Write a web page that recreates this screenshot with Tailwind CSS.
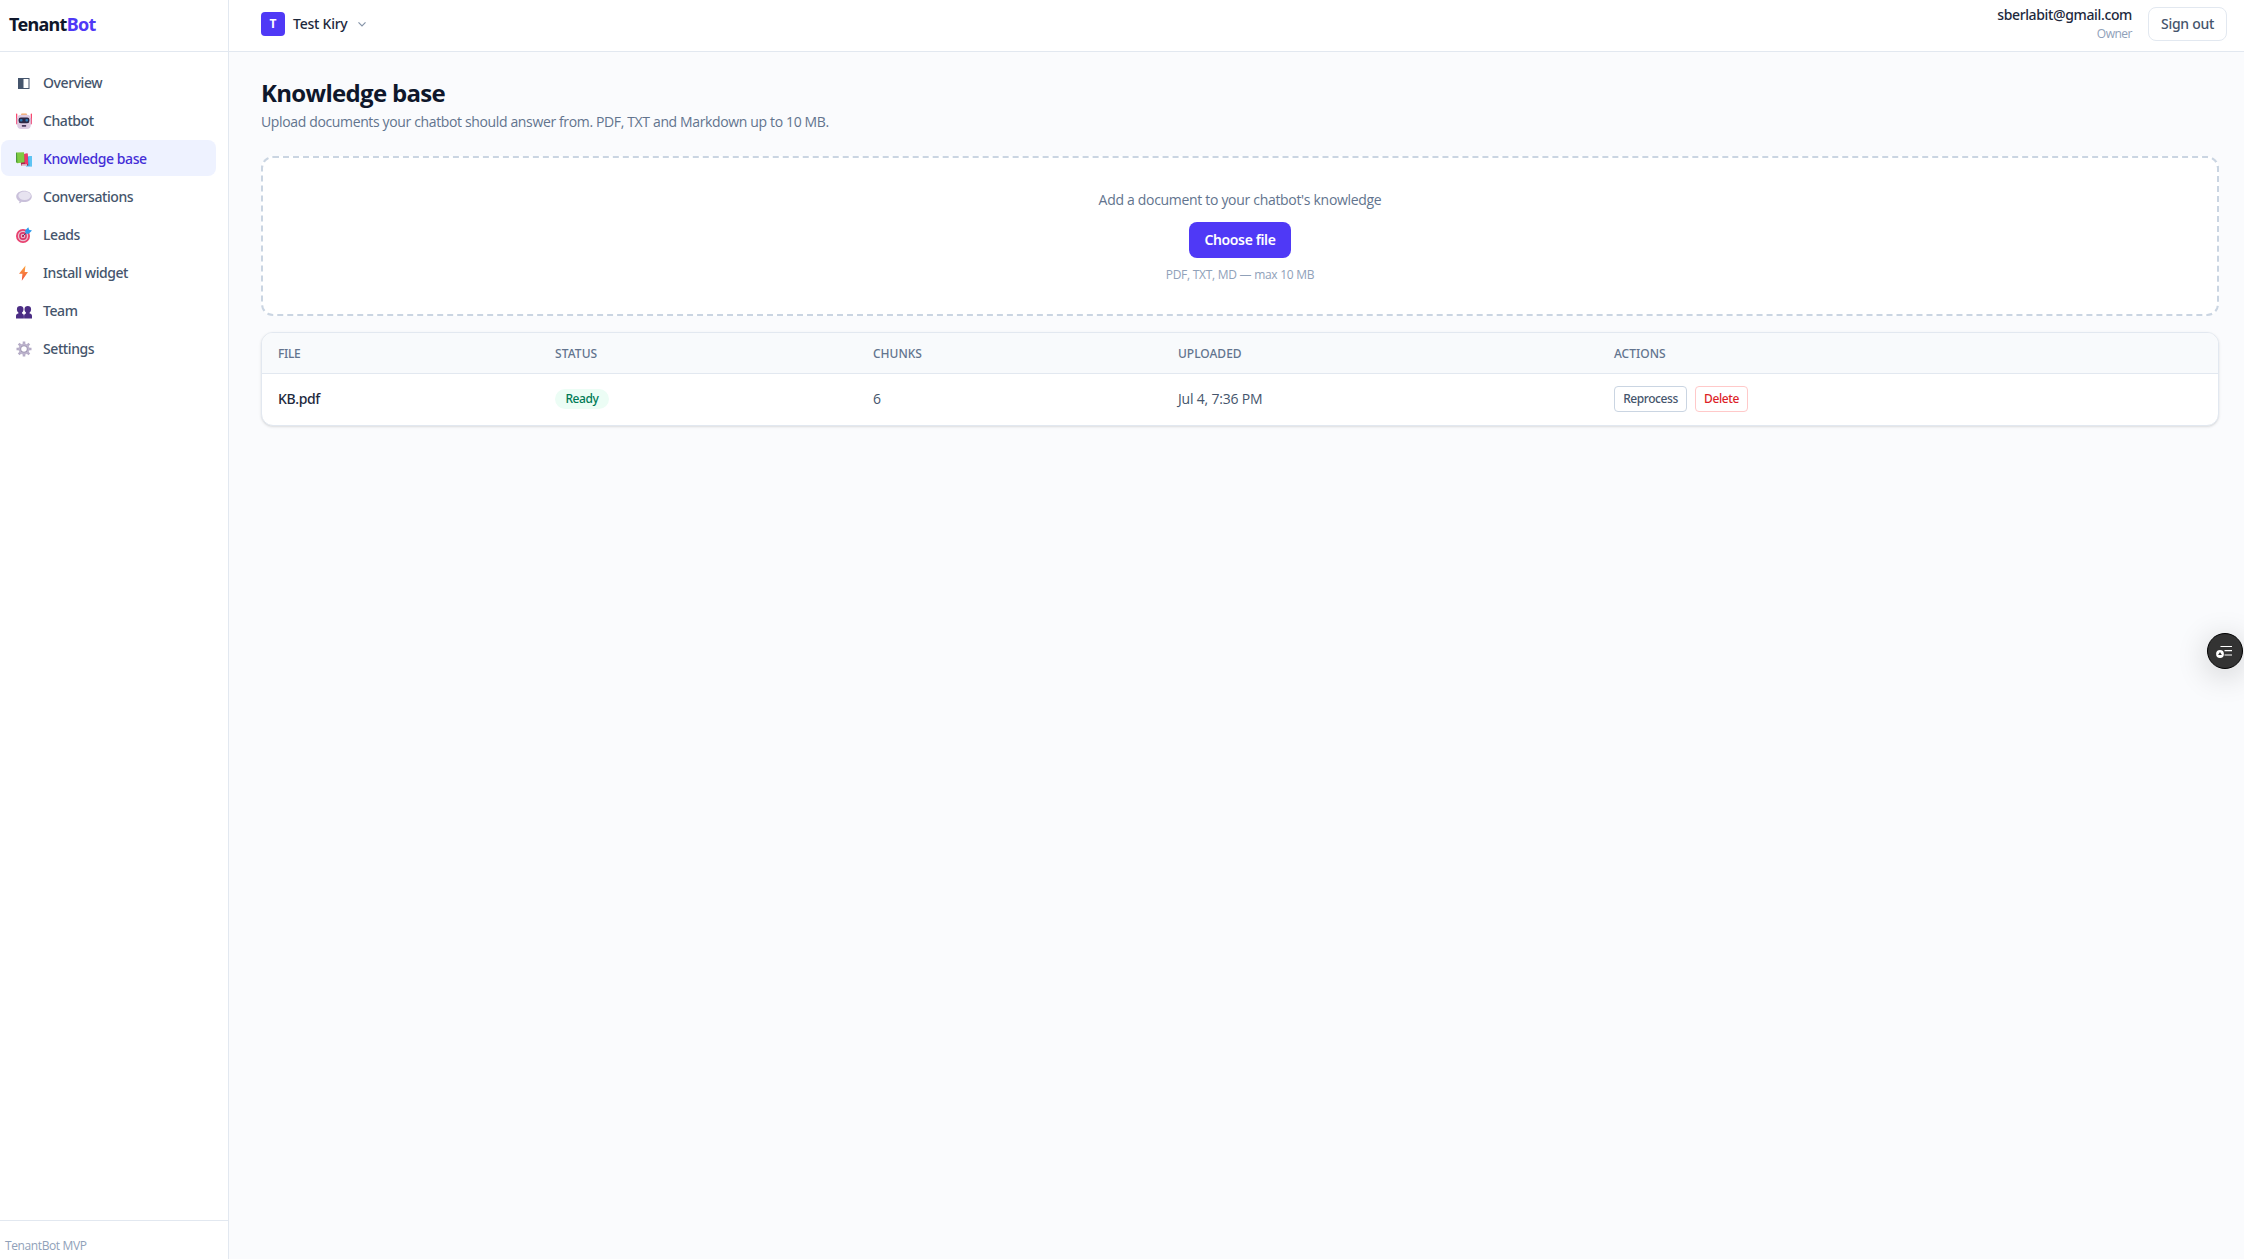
<!DOCTYPE html>
<html lang="en">
<head>
  <meta charset="UTF-8" />
  <meta name="viewport" content="width=device-width, initial-scale=1.0"/>
  <title>TenantBot - Knowledge base</title>
  <script src="https://cdn.jsdelivr.net/npm/@tailwindcss/browser@4"></script>
</head>
<body class="h-screen overflow-hidden bg-[#fafbfd] font-['Open_Sans','Noto_Sans',sans-serif] text-sm text-slate-900 flex">

  <!-- Sidebar -->
  <aside class="w-[229px] shrink-0 bg-white border-r border-slate-200 flex flex-col">
    <div class="h-[52px] border-b border-slate-200 pl-[9px] pb-[3px] flex items-center">
      <span class="font-['Noto_Sans',sans-serif] text-lg font-bold whitespace-nowrap tracking-[-0.7px]">Tenant<span class="text-[#4f39f6]">Bot</span></span>
    </div>

    <nav class="flex-1 pt-3 pl-px pr-3 space-y-0.5 font-['Noto_Sans',sans-serif] font-medium text-slate-600 tracking-[-0.42px]">
      <a href="#" class="flex items-center h-9 pt-px pl-[15px] gap-[11px] rounded-lg">
        <svg class="w-4 h-4" viewBox="0 0 16 16">
          <rect x="2.5" y="3.5" width="10.500" height="10" fill="#fff" stroke="#45556c"/>
          <rect x="2.5" y="3.5" width="5" height="10" fill="#45556c"/>
        </svg>
        <span>Overview</span>
      </a>
      <a href="#" class="flex items-center h-9 pt-px pl-[15px] gap-[11px] rounded-lg">
        <svg class="w-4 h-4" viewBox="0 0 16 16">
          <rect x="0" y="0.5" width="1.3" height="8" rx="0.6" fill="#f8486f"/>
          <rect x="14.7" y="0.5" width="1.3" height="8" rx="0.6" fill="#f8486f"/>
          <rect x="0" y="5" width="2.5" height="6.5" rx="1" fill="#f0638a"/>
          <rect x="13.5" y="5" width="2.5" height="6.5" rx="1" fill="#f0638a"/>
          <rect x="5" y="0.5" width="6" height="3" rx="1" fill="#f5a765"/>
          <rect x="1.2" y="1.8" width="13.6" height="14.2" rx="4" fill="#dccbe2"/>
          <rect x="2.6" y="4.6" width="10.8" height="5.6" rx="2.2" fill="#2b2745"/>
          <rect x="4" y="6" width="2.5" height="2.6" rx="0.8" fill="#2d79b5"/>
          <rect x="9.5" y="6" width="2.5" height="2.6" rx="0.8" fill="#2d79b5"/>
          <rect x="5.8" y="12" width="4.4" height="1.7" rx="0.6" fill="#4a3a5c"/>
        </svg>
        <span>Chatbot</span>
      </a>
      <a href="#" class="flex items-center h-9 pt-px pl-[15px] gap-[11px] rounded-lg bg-[#eef2ff] text-[#432dd7]">
        <svg class="w-4 h-4" viewBox="0 0 16 16">
          <path d="M9 5.500h7v10H10z" fill="#3bb3ec"/>
          <path d="M12.500 5H16v10h-2z" fill="#5ec4f3"/>
          <path d="M4.500 3.500L11.500 2.500l.7 12H5z" fill="#b02549"/>
          <path d="M8 3l3.500-.5.700 10.500-3.200.5z" fill="#f0386b"/>
          <path d="M5.500 13.200h5.500v1.600H6z" fill="#e3d6e4"/>
          <path d="M0 1.500l8-.3.600 10-7.400 1L0 11z" fill="#7fcb42"/>
          <path d="M0 1.500l1 .8.400 9.800L0 11z" fill="#4a9a3b"/>
        </svg>
        <span>Knowledge base</span>
      </a>
      <a href="#" class="flex items-center h-9 pt-px pl-[15px] gap-[11px] rounded-lg">
        <svg class="w-4 h-4" viewBox="0 0 16 16">
          <path d="M8 1.800c4.300 0 7.800 2.400 7.800 5.600S12.300 13 8 13c-.8 0-1.600-.1-2.300-.2-.7 1-1.700 1.600-2.900 1.400.6-.6.8-1.300.7-2C1.700 11.200.2 9.500.2 7.400.2 4.200 3.700 1.800 8 1.800z" fill="#c9c0da"/>
          <ellipse cx="8.600" cy="6.700" rx="6.200" ry="4.200" fill="#e7e3f0"/>
        </svg>
        <span>Conversations</span>
      </a>
      <a href="#" class="flex items-center h-9 pt-px pl-[15px] gap-[11px] rounded-lg">
        <svg class="w-4 h-4" viewBox="0 0 16 16">
          <circle cx="7" cy="9" r="7" fill="#e8416f"/>
          <circle cx="7" cy="9" r="5.200" fill="#e9c3d3"/>
          <circle cx="7" cy="9" r="3.900" fill="#d93a6b"/>
          <circle cx="7" cy="9" r="2.300" fill="#ecc0d2"/>
          <circle cx="7" cy="9" r="1.200" fill="#c22a5c"/>
          <path d="M7 9l5-5" stroke="#56416f" stroke-width="1"/>
          <path d="M9.300 6V3.300L12.300.2l.8 2.600 2.900.8L12.700 6.800H10z" fill="#2f9bea"/>
        </svg>
        <span>Leads</span>
      </a>
      <a href="#" class="flex items-center h-9 pt-px pl-[15px] gap-[11px] rounded-lg">
        <svg class="w-4 h-4" viewBox="0 0 16 16">
          <defs>
            <linearGradient id="bolt" x1="0" y1="0" x2="0" y2="1">
              <stop offset="0" stop-color="#fba83f"/>
              <stop offset="1" stop-color="#f2503f"/>
            </linearGradient>
          </defs>
          <path d="M9.500.5L3 8.800h3.400L5.800 15.700 12 7H8.700z" fill="url(#bolt)"/>
        </svg>
        <span>Install widget</span>
      </a>
      <a href="#" class="flex items-center h-9 pt-px pl-[15px] gap-[11px] rounded-lg">
        <svg class="w-4 h-4" viewBox="0 0 16 16" fill="#4b2d84">
          <path d="M4.200 3c2 0 3.300 1.200 3.300 3.200 0 1.600-.6 2.700-1.500 3.300v1c1.100.3 1.900 1.200 1.900 2.500v2.500H0V13c0-1.300.9-2.200 2.400-2.500v-1C1.500 8.900.9 7.800.9 6.200.9 4.200 2.200 3 4.200 3z"/>
          <path d="M11.800 3c-2 0-3.300 1.200-3.300 3.200 0 1.600.6 2.700 1.500 3.300v1c-1.100.3-1.900 1.200-1.900 2.500v2.500H16V13c0-1.300-.9-2.200-2.400-2.500v-1c.9-.6 1.500-1.700 1.500-3.300 0-2-1.300-3.200-3.300-3.200z"/>
        </svg>
        <span>Team</span>
      </a>
      <a href="#" class="flex items-center h-9 pt-px pl-[15px] gap-[11px] rounded-lg">
        <svg class="w-4 h-4" viewBox="0 0 16 16">
          <path d="M8 .5v15M.5 8h15M2.700 2.700l10.600 10.600M13.300 2.700L2.700 13.300" stroke="#b5acc6" stroke-width="2.600"/>
          <circle cx="8" cy="8" r="5.500" fill="#bdb4cd"/>
          <circle cx="8" cy="8" r="3.600" fill="#978eac"/>
          <circle cx="8" cy="8" r="2.800" fill="#fff"/>
        </svg>
        <span>Settings</span>
      </a>
    </nav>

    <div class="h-[39px] border-t border-slate-200 pl-[5px] pt-[17px] text-xs text-slate-400 tracking-[-0.39px]">TenantBot MVP</div>
  </aside>

  <div class="flex-1 flex flex-col">
    <!-- Header -->
    <header class="h-[52px] shrink-0 bg-white border-b border-slate-200 pl-8 pr-[17px] flex items-center justify-between font-['Noto_Sans',sans-serif]">
      <button class="flex items-center gap-2 -mt-[3px]">
        <span class="w-6 h-6 rounded bg-[#4f39f6] text-white text-xs font-bold flex items-center justify-center">T</span>
        <span class="font-medium text-slate-800 tracking-[-0.24px]">Test Kiry</span>
        <svg class="w-2 h-2 ml-0.5" viewBox="0 0 8 8" fill="none" stroke="#8593a8" stroke-width="1.200">
          <path d="M.5 2.300L4 5.800l3.500-3.500"/>
        </svg>
      </button>
      <div class="flex items-center gap-4 -mt-[3px]">
        <div class="text-right">
          <p class="font-medium text-slate-800 leading-[18px] tracking-[-0.36px]">sberlabit@gmail.com</p>
          <p class="mt-0.5 font-['Open_Sans',sans-serif] text-xs text-slate-400 tracking-[-0.5px]">Owner</p>
        </div>
        <button class="h-[34px] w-[79px] border border-slate-200 rounded-lg font-medium text-slate-600 tracking-[-0.28px]">Sign out</button>
      </div>
    </header>

    <main class="flex-1 pt-[23px] pl-8 pr-[25px]">
      <h1 class="text-2xl leading-9 font-bold tracking-[-0.68px]">Knowledge base</h1>
      <p class="mt-px text-slate-500 leading-5 tracking-[-0.36px]">Upload documents your chatbot should answer from. PDF, TXT and Markdown up to 10 MB.</p>

      <!-- Upload area -->
      <div class="mt-6 h-40 border-2 border-dashed border-slate-300 rounded-xl bg-white flex flex-col items-center pt-8">
        <p class="text-slate-500 tracking-[-0.31px]">Add a document to your chatbot's knowledge</p>
        <button class="mt-3 h-9 w-[102px] rounded-lg bg-[#4f39f6] text-white font-['Noto_Sans',sans-serif] font-semibold tracking-[-0.38px]">Choose file</button>
        <p class="mt-[9px] text-xs text-slate-400 tracking-[-0.27px]">PDF, TXT, MD — max 10 MB</p>
      </div>

      <!-- Documents table -->
      <div class="mt-4 border border-slate-200 rounded-xl bg-white shadow-sm overflow-hidden">
        <table class="w-full table-fixed text-left">
          <thead class="bg-slate-50 font-['Noto_Sans',sans-serif] text-xs uppercase text-slate-500">
            <tr class="h-10 border-b border-slate-200">
              <th class="w-[277px] pt-0.5 px-4 font-medium tracking-[-0.3px]">File</th>
              <th class="w-[318px] pt-0.5 px-4 font-medium tracking-[0.1px]">Status</th>
              <th class="w-[305px] pt-0.5 px-4 font-medium">Chunks</th>
              <th class="w-[436px] pt-0.5 px-4 font-medium">Uploaded</th>
              <th class="pt-0.5 px-4 font-medium">Actions</th>
            </tr>
          </thead>
          <tbody>
            <tr class="h-[52px] text-slate-600">
              <td class="px-4 pb-px font-['Noto_Sans',sans-serif] font-medium text-slate-800 tracking-[-0.34px]">KB.pdf</td>
              <td class="px-4 pb-px">
                <span class="flex items-center justify-center w-[54px] h-5 rounded-full bg-[#ecfdf5] font-['Noto_Sans',sans-serif] text-xs font-medium text-[#007a55] tracking-[-0.4px]">Ready</span>
              </td>
              <td class="px-4 pb-px">6</td>
              <td class="px-4 pb-px tracking-[-0.2px]">Jul 4, 7:36 PM</td>
              <td class="px-4 pb-px">
                <div class="flex gap-2 font-['Noto_Sans',sans-serif] text-xs font-medium tracking-[-0.42px]">
                  <button class="w-[73px] h-[26px] border border-slate-300 rounded text-slate-600">Reprocess</button>
                  <button class="w-[53px] h-[26px] border border-[#ffc9c9] rounded text-[#dc1f28]">Delete</button>
                </div>
              </td>
            </tr>
          </tbody>
        </table>
      </div>
    </main>
  </div>

  <!-- Floating button -->
  <button class="absolute right-px top-[633px] w-9 h-9 rounded-full bg-[#333] border border-black shadow-[0_6px_32px_rgba(0,0,0,0.2)] flex items-center justify-center">
    <svg class="w-4 h-4 -ml-0.5" viewBox="0 0 16 16" fill="none" stroke="#fff" stroke-width="1.200">
      <path d="M4.500 3.500H16M8.500 7.700H16M8.500 12H16"/>
      <circle cx="4" cy="11" r="3.900" fill="#fff" stroke="none"/>
      <path d="M4 9l1.900 3H2.100z" fill="#333" stroke="none"/>
    </svg>
  </button>

</body>
</html>
